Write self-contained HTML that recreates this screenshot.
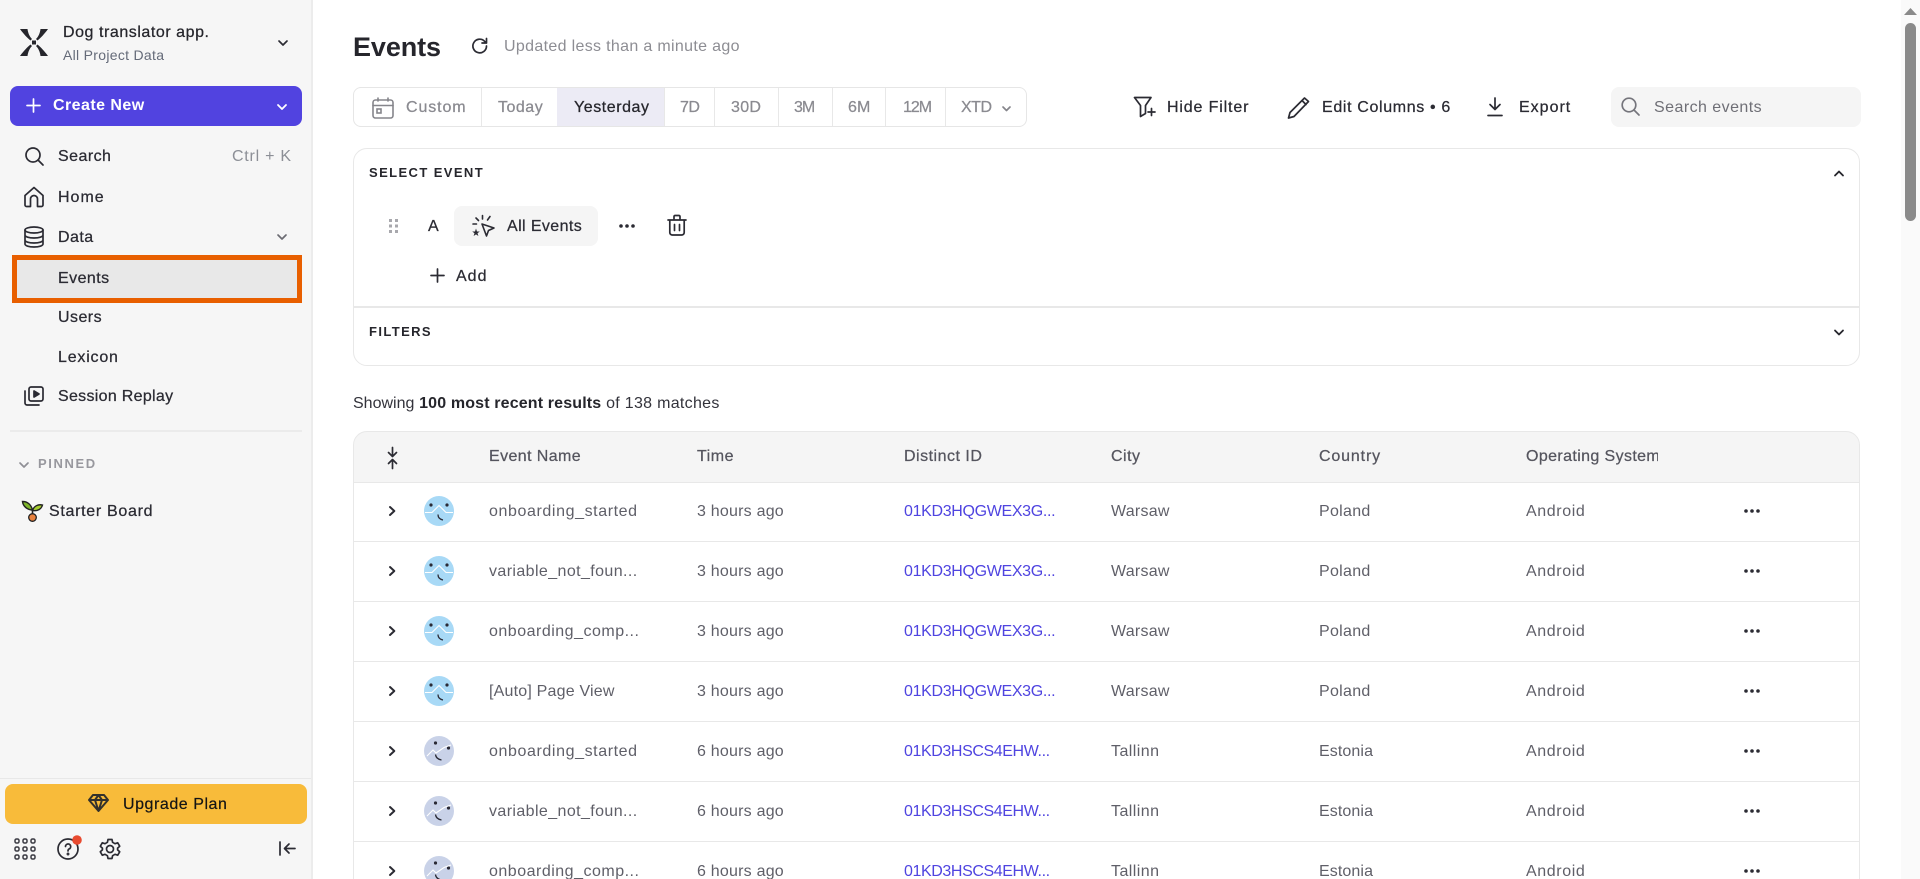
<!DOCTYPE html>
<html lang="en">
<head>
<meta charset="utf-8">
<title>Events</title>
<style>
html,body{margin:0;padding:0;width:1920px;height:879px;overflow:hidden;background:#fff;font-family:"Liberation Sans",sans-serif;color:#2b2b33}
*{box-sizing:border-box}
#wrap{position:absolute;left:0;top:0;width:1920px;height:879px;overflow:hidden;background:#fff}
#sb{position:absolute;left:0;top:0;width:313px;height:879px;background:#f6f6f6;border-right:2px solid #ececec}
.t{position:absolute;white-space:nowrap;transform:translateY(-50%);margin-top:1px;font-size:16px;line-height:20px;letter-spacing:.45px}
.m{-webkit-text-stroke:.25px currentColor}
.b{font-weight:bold}
svg{position:absolute;overflow:visible}
.i{fill:none;stroke:#2b2b33;stroke-width:1.7;stroke-linecap:round;stroke-linejoin:round}
.g{color:#8a8a90}
.sep{position:absolute;top:0;bottom:0;width:1px;background:#e8e8e8}
.row{position:absolute;left:353px;width:1507px;height:60px;border-bottom:1.5px solid #e8e8e8;border-left:1.5px solid #e8e8e8;border-right:1.5px solid #e8e8e8}
.c{color:#5f5f68}
.l{color:#4f44e0;letter-spacing:-.33px}
.l2{color:#4f44e0;letter-spacing:-.4px}
.tm{letter-spacing:.22px}
.ci{letter-spacing:.25px}
.co{letter-spacing:.3px}
.co2{letter-spacing:.1px}
.os{letter-spacing:.6px}
.h{color:#55555e;-webkit-text-stroke:.25px #55555e;letter-spacing:.5px}
</style>
</head>
<body>
<div id="wrap">
<svg width="0" height="0" style="position:absolute">
<defs>
<symbol id="a1" viewBox="-15 -15 30 30" overflow="visible">
<circle r="15" fill="#a8d9f6"/>
<circle cx="-8" cy="-6" r="1.6" fill="#2a2a35"/><circle cx="8" cy="-6" r="1.6" fill="#2a2a35"/>
<path d="M-14 1.500H-7L0-5.500 7 1.500H14" fill="none" stroke="#fff" stroke-width="1.100"/>
<path d="M-1 3.500Q-1 8 4 9" fill="none" stroke="#2a2a35" stroke-width="1.300"/>
</symbol>
<symbol id="a2" viewBox="-15 -15 30 30" overflow="visible">
<circle r="15" fill="#c9d2e8"/>
<circle cx="-3.500" cy="-8" r="1.600" fill="#2a2a35"/><circle cx="9.500" cy="-3" r="1.600" fill="#2a2a35"/>
<path d="M-12 5-6-1-3 2 5-3.500 12-6" fill="none" stroke="#fff" stroke-width="1.100"/>
<path d="M-3.500 3.500Q-3 8 2.500 9" fill="none" stroke="#2a2a35" stroke-width="1.300"/>
</symbol>
<symbol id="chevR" viewBox="0 0 10 12" overflow="visible"><path d="M3 2 7.300 6 3 10" fill="none" stroke="#2b2b33" stroke-width="2" stroke-linecap="round" stroke-linejoin="round"/></symbol>
<symbol id="dots" viewBox="0 0 18 6" overflow="visible"><circle cx="3" cy="3" r="1.800" fill="#2b2b33"/><circle cx="9" cy="3" r="1.800" fill="#2b2b33"/><circle cx="15" cy="3" r="1.800" fill="#2b2b33"/></symbol>
</defs>
</svg>

<div id="sb"></div>
<!-- logo -->
<svg style="left:20px;top:29px" width="28" height="27" viewBox="0 0 28 27" fill="#26262c"><path d="M0 0H7.500C8 4 9.500 7.500 12 10L10.500 11.500C7.500 9 3.500 5 0 0ZM28 0H20.500C20 4 18.500 7.500 16 10L17.500 11.500C20.500 9 24.500 5 28 0ZM0 27H7.500C8 23 9.500 19.500 12 17L10.500 15.500C7.500 18 3.500 22 0 27ZM28 27H20.500C20 23 18.500 19.500 16 17L17.500 15.500C20.500 18 24.500 22 28 27Z"/><rect x="12" y="11.500" width="4" height="4"/></svg>
<span class="t m" style="left:63px;top:32px;color:#26262c;letter-spacing:.55px">Dog translator app.</span>
<span class="t" style="left:63px;top:54px;font-size:14px;color:#646a78;letter-spacing:.3px">All Project Data</span>
<svg class="i" style="left:278px;top:40px" width="10" height="7" viewBox="0 0 10 7"><path d="M1 1 5 5 9 1"/></svg>

<div style="position:absolute;left:10px;top:86px;width:292px;height:40px;border-radius:8px;background:#5143e0"></div>
<svg style="left:26px;top:98px" width="15" height="15" viewBox="0 0 15 15"><path d="M7.500 1V14M1 7.500H14" stroke="#fff" stroke-width="1.700" stroke-linecap="round"/></svg>
<span class="t b" style="left:53px;top:105px;color:#fff;letter-spacing:.45px">Create New</span>
<svg style="left:277px;top:104px" width="10" height="7" viewBox="0 0 10 7"><path d="M1 1 5 5 9 1" fill="none" stroke="#fff" stroke-width="1.800" stroke-linecap="round" stroke-linejoin="round"/></svg>

<svg class="i" style="left:24px;top:146px" width="20" height="20" viewBox="0 0 20 20"><circle cx="9" cy="9" r="7"/><path d="M14 14 19 19"/></svg>
<span class="t m" style="left:58px;top:156px">Search</span>
<span class="t" style="left:232px;top:156px;color:#8c8f96;letter-spacing:.75px">Ctrl + K</span>

<svg class="i" style="left:24px;top:186px" width="20" height="22" viewBox="0 0 20 22"><path d="M1 9.500 10 1.500 19 9.500V19A1.500 1.500 0 0 1 17.500 20.500H13.500V13A3.500 3.500 0 0 0 6.500 13V20.500H2.500A1.500 1.500 0 0 1 1 19Z"/></svg>
<span class="t m" style="left:58px;top:197px;letter-spacing:1px">Home</span>

<svg class="i" style="left:24px;top:226px" width="20" height="22" viewBox="0 0 20 22"><ellipse cx="10" cy="4" rx="9" ry="3"/><path d="M1 4V18C1 19.700 5 21 10 21S19 19.700 19 18V4M1 9C1 10.700 5 12 10 12S19 10.700 19 9M1 14C1 15.700 5 17 10 17S19 15.700 19 14"/></svg>
<span class="t m" style="left:58px;top:237px">Data</span>
<svg class="i" style="left:277px;top:234px;stroke:#6b6b72" width="10" height="7" viewBox="0 0 10 7"><path d="M1 1 5 5 9 1"/></svg>

<div style="position:absolute;left:12px;top:255px;width:290px;height:48px;background:#e8e8e8;border:5px solid #e85f00"></div>
<span class="t m" style="left:58px;top:278px">Events</span>
<span class="t m" style="left:58px;top:317px">Users</span>
<span class="t m" style="left:58px;top:357px;letter-spacing:.8px">Lexicon</span>
<svg class="i" style="left:24px;top:386px" width="20" height="20" viewBox="0 0 20 20"><rect x="5" y="1" width="14" height="14" rx="2"/><path d="M1 5V17A2 2 0 0 0 3 19H15"/><path d="M10 5 15 8 10 11Z" fill="#2b2b33"/></svg>
<span class="t m" style="left:58px;top:396px;letter-spacing:.3px">Session Replay</span>

<div style="position:absolute;left:10px;top:430px;width:292px;height:2px;background:#ebebeb"></div>
<svg class="i" style="left:19px;top:462px;stroke:#8f8f95" width="10" height="7" viewBox="0 0 10 7"><path d="M1 1 5 5 9 1"/></svg>
<span class="t b" style="left:38px;top:463px;font-size:13px;color:#98989e;letter-spacing:1.600px">PINNED</span>

<svg style="left:22px;top:500px" width="21" height="22" viewBox="0 0 21 22"><path d="M10.500 10C9 4 5 1.500 0.500 1.500 1 6 5 10 10.500 10Z" fill="#7db42a" stroke="#222" stroke-width="1.400"/><path d="M10.500 10.500C12 6 16 4 20.500 5 19.500 9 15.500 11.500 10.500 10.500Z" fill="#a4cc2e" stroke="#222" stroke-width="1.400"/><path d="M10.500 9V15" stroke="#222" stroke-width="1.600"/><circle cx="10.500" cy="17.500" r="3.800" fill="#e8813d" stroke="#222" stroke-width="1.300"/></svg>
<span class="t m" style="left:49px;top:511px;letter-spacing:.7px">Starter Board</span>

<div style="position:absolute;left:0;top:778px;width:311px;height:1px;background:#e8e8e8"></div>
<div style="position:absolute;left:5px;top:784px;width:302px;height:40px;border-radius:8px;background:#f8bb3a"></div>
<svg class="i" style="left:88px;top:794px;stroke:#33312c;stroke-width:2" width="21" height="18" viewBox="0 0 21 18"><path d="M5 1H16L20 6 10.500 17 1 6ZM1 6H20M7 6 10.500 17 14 6 10.500 1 7 6Z"/></svg>
<span class="t" style="left:123px;top:804px;color:#141414;letter-spacing:.55px;-webkit-text-stroke:.2px #141414">Upgrade Plan</span>

<svg style="left:14px;top:838px" width="22" height="22" viewBox="0 0 22 22"><g fill="none" stroke="#3a3a42" stroke-width="1.500"><rect x="1" y="1" width="4" height="4" rx="1.500"/><rect x="9" y="1" width="4" height="4" rx="1.500"/><rect x="17" y="1" width="4" height="4" rx="1.500"/><rect x="1" y="9" width="4" height="4" rx="1.500"/><rect x="9" y="9" width="4" height="4" rx="1.500"/><rect x="17" y="9" width="4" height="4" rx="1.500"/><rect x="1" y="17" width="4" height="4" rx="1.500"/><rect x="9" y="17" width="4" height="4" rx="1.500"/><rect x="17" y="17" width="4" height="4" rx="1.500"/></g></svg>
<svg class="i" style="left:57px;top:838px" width="22" height="22" viewBox="0 0 22 22"><circle cx="11" cy="11" r="10"/><path d="M8.500 8.500A2.600 2.600 0 1 1 12 11C11.200 11.500 11 12 11 13"/><circle cx="11" cy="16" r=".6"/><circle cx="20" cy="2" r="4.800" fill="#e84a2f" stroke="none"/></svg>
<svg class="i" style="left:99px;top:838px" width="22" height="22" viewBox="0 0 22 22"><circle cx="11" cy="11" r="3.500"/><path d="M9 1.500H13L13.600 4.300 16 5.700 18.700 4.800 20.700 8.200 18.600 10.100V11.900L20.700 13.800 18.700 17.200 16 16.300 13.600 17.700 13 20.500H9L8.400 17.700 6 16.300 3.300 17.200 1.300 13.800 3.400 11.900V10.100L1.300 8.200 3.300 4.800 6 5.700 8.400 4.300Z"/></svg>
<svg class="i" style="left:279px;top:841px" width="17" height="15" viewBox="0 0 17 15"><path d="M1 1V14M16 7.500H6M10 3 5.500 7.500 10 12"/></svg>

<!-- Header -->
<span class="t b" style="left:353px;top:46px;font-size:27px;line-height:34px;color:#26262c;letter-spacing:-.1px">Events</span>
<svg class="i" style="left:471px;top:37px" width="18" height="18" viewBox="0 0 18 18"><path d="M15.500 9A6.800 6.800 0 1 1 13.500 4.200L15.500 6M15.500 1.500V6H11"/></svg>
<span class="t" style="left:504px;top:46px;color:#8d8d93;letter-spacing:.33px">Updated less than a minute ago</span>

<!-- Date bar -->
<div style="position:absolute;left:353px;top:87px;width:674px;height:40px;border:1.500px solid #e6e6e6;border-radius:8px;overflow:hidden">
  <div style="position:absolute;left:203px;top:0;bottom:0;width:107px;background:#ecebf5"></div>
  <div class="sep" style="left:127px"></div>
  <div class="sep" style="left:310px"></div>
  <div class="sep" style="left:360px"></div>
  <div class="sep" style="left:424px"></div>
  <div class="sep" style="left:478px"></div>
  <div class="sep" style="left:531px"></div>
  <div class="sep" style="left:591px"></div>
</div>
<svg style="left:372px;top:97px" width="22" height="22" viewBox="0 0 22 22" fill="none" stroke="#85858b" stroke-width="1.600" stroke-linecap="round"><rect x="1" y="3" width="20" height="18" rx="2.500"/><path d="M1 8.500H21M6 1V4M16 1V4"/><rect x="5" y="12" width="4" height="4"/></svg>
<span class="t m g" style="left:406px;top:107px;letter-spacing:.9px">Custom</span>
<span class="t m g" style="left:498px;top:107px;letter-spacing:.5px">Today</span>
<span class="t m" style="left:574px;top:107px;color:#26262c;letter-spacing:.55px">Yesterday</span>
<span class="t m g" style="left:680px;top:107px;letter-spacing:-.5px">7D</span>
<span class="t m g" style="left:731px;top:107px;letter-spacing:.3px">30D</span>
<span class="t m g" style="left:794px;top:107px;letter-spacing:-1px">3M</span>
<span class="t m g" style="left:848px;top:107px;letter-spacing:.1px">6M</span>
<span class="t m g" style="left:903px;top:107px;letter-spacing:-1px">12M</span>
<span class="t m g" style="left:961px;top:107px;letter-spacing:-.5px">XTD</span>
<svg class="i" style="left:1002px;top:106px;stroke:#85858b" width="9" height="6" viewBox="0 0 9 6"><path d="M1 1 4.500 4.500 8 1"/></svg>

<!-- Right tools -->
<svg class="i" style="left:1133px;top:96px" width="24" height="22" viewBox="0 0 24 22"><path d="M1.500 1.500H18L12.500 9.500V17.500L7.500 20.500V9.500ZM15 16H22M18.500 12.500V19.500"/></svg>
<span class="t m" style="left:1167px;top:107px;letter-spacing:.85px">Hide Filter</span>
<svg class="i" style="left:1287px;top:96px" width="24" height="23" viewBox="0 0 24 23"><path d="M17.500 2 21.500 5.500 7 20.500 1.500 22 3 16.500ZM15 4.500 19 8.500"/></svg>
<span class="t m" style="left:1322px;top:107px;letter-spacing:.65px">Edit Columns • 6</span>
<svg class="i" style="left:1487px;top:97px" width="16" height="20" viewBox="0 0 16 20"><path d="M8 1V12M3 7.500 8 12.500 13 7.500M1 18.500H15"/></svg>
<span class="t m" style="left:1519px;top:107px;letter-spacing:1px">Export</span>
<div style="position:absolute;left:1611px;top:87px;width:250px;height:40px;border-radius:8px;background:#f5f5f5"></div>
<svg class="i" style="left:1621px;top:97px;stroke:#75757c" width="19" height="19" viewBox="0 0 19 19"><circle cx="8" cy="8" r="6.800"/><path d="M13 13 18 18"/></svg>
<span class="t" style="left:1654px;top:107px;color:#6f6f76;letter-spacing:.45px">Search events</span>

<!-- Filter panel -->
<div style="position:absolute;left:353px;top:148px;width:1507px;height:218px;border:1.500px solid #e8e8e8;border-radius:14px"></div>
<span class="t b" style="left:369px;top:172px;font-size:13px;letter-spacing:1.400px;color:#26262c">SELECT EVENT</span>
<svg style="left:1834px;top:170px" width="10" height="7" viewBox="0 0 10 7"><path d="M1 5.500 5 1.500 9 5.500" fill="none" stroke="#26262c" stroke-width="1.800" stroke-linecap="round" stroke-linejoin="round"/></svg>
<svg style="left:389px;top:219px" width="9" height="14" viewBox="0 0 9 14" fill="#a8a8ad"><rect width="3" height="3"/><rect x="6" width="3" height="3"/><rect y="5.500" width="3" height="3"/><rect x="6" y="5.500" width="3" height="3"/><rect y="11" width="3" height="3"/><rect x="6" y="11" width="3" height="3"/></svg>
<span class="t m" style="left:428px;top:226px">A</span>
<div style="position:absolute;left:454px;top:206px;width:144px;height:40px;border-radius:8px;background:#f5f5f5"></div>
<svg style="left:471px;top:214px" width="24" height="24" viewBox="0 0 24 24" fill="none" stroke="#2b2b33" stroke-width="1.600" stroke-linecap="round" stroke-linejoin="round"><path d="M11 10 23 14 17.500 16.500 15.500 22ZM11.500 1.500V5M5 4 7.500 6.500M2 10H5.500M19 2.500 16.500 6"/><path d="M5 14.500 6 17.500H8.800L6.500 19.300 7.400 22 5 20.400 2.600 22 3.500 19.300 1.200 17.500H4Z" fill="#2b2b33" stroke="none"/></svg>
<span class="t m" style="left:507px;top:226px;letter-spacing:.4px">All Events</span>
<svg style="left:618px;top:223px" width="18" height="6" viewBox="0 0 18 6"><use href="#dots"/></svg>
<svg class="i" style="left:667px;top:214px" width="20" height="22" viewBox="0 0 20 22"><path d="M1 6H19M7 6V2.500A1.200 1.200 0 0 1 8.200 1.500H11.800A1.200 1.200 0 0 1 13 2.500V6M2.800 6V18.500A2.500 2.500 0 0 0 5.300 21H14.700A2.500 2.500 0 0 0 17.200 18.500V6M7.500 10.500V16.500M12.500 10.500V16.500"/></svg>
<svg style="left:430px;top:268px" width="15" height="15" viewBox="0 0 15 15"><path d="M7.500 1V14M1 7.500H14" stroke="#2b2b33" stroke-width="1.700" stroke-linecap="round"/></svg>
<span class="t m" style="left:456px;top:276px;letter-spacing:1px">Add</span>
<div style="position:absolute;left:353px;top:306px;width:1507px;height:1.500px;background:#e8e8e8"></div>
<span class="t b" style="left:369px;top:331px;font-size:13px;letter-spacing:1.400px;color:#26262c">FILTERS</span>
<svg style="left:1834px;top:329px" width="10" height="7" viewBox="0 0 10 7"><path d="M1 1.500 5 5.500 9 1.500" fill="none" stroke="#26262c" stroke-width="1.800" stroke-linecap="round" stroke-linejoin="round"/></svg>

<span class="t" style="left:353px;top:403px;letter-spacing:.3px;color:#33333b"><span style="letter-spacing:0">Showing</span> <b style="color:#26262c;letter-spacing:.15px">100 most recent results</b> of 138 matches</span>

<!-- Table header -->
<div style="position:absolute;left:353px;top:431px;width:1507px;height:52px;background:#f5f5f5;border:1.500px solid #e8e8e8;border-radius:14px 14px 0 0"></div>
<svg style="left:386px;top:447px" width="13" height="22" viewBox="0 0 13 22" fill="none" stroke="#2b2b33" stroke-width="1.700" stroke-linecap="round" stroke-linejoin="round"><path d="M6.500 0.500V9M2.500 5.500 6.500 9.500 10.500 5.500M6.500 21.500V13M2.500 16.500 6.500 12.500 10.500 16.500"/></svg>
<span class="t h" style="left:489px;top:456px;letter-spacing:.4px">Event Name</span>
<span class="t h" style="left:697px;top:456px">Time</span>
<span class="t h" style="left:904px;top:456px">Distinct ID</span>
<span class="t h" style="left:1111px;top:456px">City</span>
<span class="t h" style="left:1319px;top:456px;letter-spacing:.85px">Country</span>
<span class="t h" style="left:1526px;top:456px;width:132px;overflow:hidden;letter-spacing:.38px">Operating System</span>

<!-- Rows -->
<div class="row" style="top:482px"></div>
<svg style="left:387px;top:505px" width="10" height="12"><use href="#chevR"/></svg>
<svg style="left:424px;top:496px" width="30" height="30"><use href="#a1"/></svg>
<span class="t c" style="left:489px;top:511px;letter-spacing:.6px">onboarding_started</span>
<span class="t c tm" style="left:697px;top:511px">3 hours ago</span>
<span class="t l" style="left:904px;top:511px">01KD3HQGWEX3G...</span>
<span class="t c ci" style="left:1111px;top:511px">Warsaw</span>
<span class="t c co" style="left:1319px;top:511px">Poland</span>
<span class="t c os" style="left:1526px;top:511px">Android</span>
<svg style="left:1743px;top:508px" width="18" height="6"><use href="#dots"/></svg>

<div class="row" style="top:542px"></div>
<svg style="left:387px;top:565px" width="10" height="12"><use href="#chevR"/></svg>
<svg style="left:424px;top:556px" width="30" height="30"><use href="#a1"/></svg>
<span class="t c" style="left:489px;top:571px;letter-spacing:.4px">variable_not_foun...</span>
<span class="t c tm" style="left:697px;top:571px">3 hours ago</span>
<span class="t l" style="left:904px;top:571px">01KD3HQGWEX3G...</span>
<span class="t c ci" style="left:1111px;top:571px">Warsaw</span>
<span class="t c co" style="left:1319px;top:571px">Poland</span>
<span class="t c os" style="left:1526px;top:571px">Android</span>
<svg style="left:1743px;top:568px" width="18" height="6"><use href="#dots"/></svg>

<div class="row" style="top:602px"></div>
<svg style="left:387px;top:625px" width="10" height="12"><use href="#chevR"/></svg>
<svg style="left:424px;top:616px" width="30" height="30"><use href="#a1"/></svg>
<span class="t c" style="left:489px;top:631px;letter-spacing:.5px">onboarding_comp...</span>
<span class="t c tm" style="left:697px;top:631px">3 hours ago</span>
<span class="t l" style="left:904px;top:631px">01KD3HQGWEX3G...</span>
<span class="t c ci" style="left:1111px;top:631px">Warsaw</span>
<span class="t c co" style="left:1319px;top:631px">Poland</span>
<span class="t c os" style="left:1526px;top:631px">Android</span>
<svg style="left:1743px;top:628px" width="18" height="6"><use href="#dots"/></svg>

<div class="row" style="top:662px"></div>
<svg style="left:387px;top:685px" width="10" height="12"><use href="#chevR"/></svg>
<svg style="left:424px;top:676px" width="30" height="30"><use href="#a1"/></svg>
<span class="t c" style="left:489px;top:691px;letter-spacing:.2px">[Auto] Page View</span>
<span class="t c tm" style="left:697px;top:691px">3 hours ago</span>
<span class="t l" style="left:904px;top:691px">01KD3HQGWEX3G...</span>
<span class="t c ci" style="left:1111px;top:691px">Warsaw</span>
<span class="t c co" style="left:1319px;top:691px">Poland</span>
<span class="t c os" style="left:1526px;top:691px">Android</span>
<svg style="left:1743px;top:688px" width="18" height="6"><use href="#dots"/></svg>

<div class="row" style="top:722px"></div>
<svg style="left:387px;top:745px" width="10" height="12"><use href="#chevR"/></svg>
<svg style="left:424px;top:736px" width="30" height="30"><use href="#a2"/></svg>
<span class="t c" style="left:489px;top:751px;letter-spacing:.6px">onboarding_started</span>
<span class="t c tm" style="left:697px;top:751px">6 hours ago</span>
<span class="t l2" style="left:904px;top:751px">01KD3HSCS4EHW...</span>
<span class="t c" style="left:1111px;top:751px">Tallinn</span>
<span class="t c co2" style="left:1319px;top:751px">Estonia</span>
<span class="t c os" style="left:1526px;top:751px">Android</span>
<svg style="left:1743px;top:748px" width="18" height="6"><use href="#dots"/></svg>

<div class="row" style="top:782px"></div>
<svg style="left:387px;top:805px" width="10" height="12"><use href="#chevR"/></svg>
<svg style="left:424px;top:796px" width="30" height="30"><use href="#a2"/></svg>
<span class="t c" style="left:489px;top:811px;letter-spacing:.4px">variable_not_foun...</span>
<span class="t c tm" style="left:697px;top:811px">6 hours ago</span>
<span class="t l2" style="left:904px;top:811px">01KD3HSCS4EHW...</span>
<span class="t c" style="left:1111px;top:811px">Tallinn</span>
<span class="t c co2" style="left:1319px;top:811px">Estonia</span>
<span class="t c os" style="left:1526px;top:811px">Android</span>
<svg style="left:1743px;top:808px" width="18" height="6"><use href="#dots"/></svg>

<div class="row" style="top:842px;height:60px"></div>
<svg style="left:387px;top:865px" width="10" height="12"><use href="#chevR"/></svg>
<svg style="left:424px;top:856px" width="30" height="30"><use href="#a2"/></svg>
<span class="t c" style="left:489px;top:871px;letter-spacing:.5px">onboarding_comp...</span>
<span class="t c tm" style="left:697px;top:871px">6 hours ago</span>
<span class="t l2" style="left:904px;top:871px">01KD3HSCS4EHW...</span>
<span class="t c" style="left:1111px;top:871px">Tallinn</span>
<span class="t c co2" style="left:1319px;top:871px">Estonia</span>
<span class="t c os" style="left:1526px;top:871px">Android</span>
<svg style="left:1743px;top:868px" width="18" height="6"><use href="#dots"/></svg>

<!-- Scrollbar -->
<div style="position:absolute;left:1901px;top:0;width:19px;height:879px;background:#fafafa"></div>
<div style="position:absolute;left:1905px;top:23px;width:11px;height:198px;border-radius:6px;background:#8a8a8a"></div>
<svg style="left:1904px;top:8px" width="13" height="7" viewBox="0 0 13 7"><path d="M6.500 0 13 7H0Z" fill="#8a8a8a"/></svg>
</div>
</body>
</html>
